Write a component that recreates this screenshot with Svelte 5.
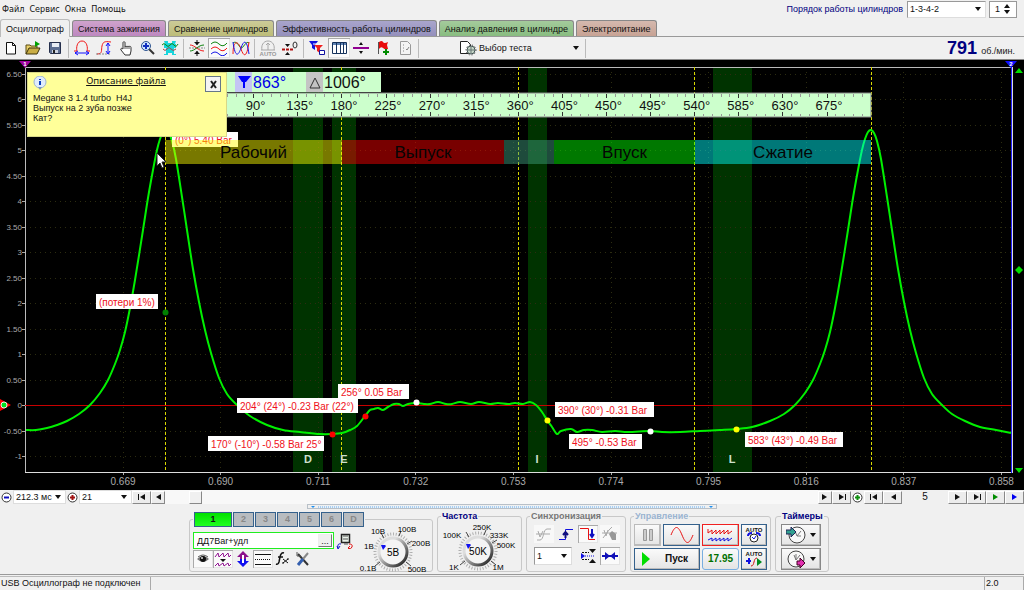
<script lang="ts">
  /**
   * App.svelte — oscilloscope main window: menu, mode tabs, toolbar, the
   * cylinder pressure plot with its phase overlay, and the control panel.
   */

  interface Tab {
    name: string;
    tone: string;
  }

  interface Tag {
    x: number;
    y: number;
    w: number;
    text: string;
  }

  const MENU = ['Файл', 'Сервис', 'Окна', 'Помощь'];

  const TABS: Tab[] = [
    { name: 'Осциллограф', tone: 'plain' },
    { name: 'Система зажигания', tone: 'pink' },
    { name: 'Сравнение цилиндров', tone: 'olive' },
    { name: 'Эффективность работы цилиндров', tone: 'violet' },
    { name: 'Анализ давления в цилиндре', tone: 'green' },
    { name: 'Электропитание', tone: 'tan' },
  ];

  // '|' stands for a separator
  const TOOLS = [
    'new', 'open', 'save', '|', 'period', 'level', 'hand', 'zoom', 'clamp', '|',
    'center', 'waves', 'overlap', '|', 'auto', 'zero', '|',
    'filter', 'grid', 'split', 'flag', 'notes', '|',
  ];
  const PRESSED = ['waves', 'grid'];

  let activeTab = $state(0);
  let channel = $state('1');
  let order = $state('1-3-4-2');
  let cylinder = $state(1);
  let sweep = $state('212.3 мс');
  let scale = $state('21');
  let scroll = $state(38);
  let channelName = $state('ДД7Bar+удл');
  let syncChannel = $state('1');
  let noteOpen = $state(true);

  // ── Plot geometry ─────────────────────────────────────────────────────────
  const BASE_W = 1024;
  const TOP = 60;
  const PLOT_H = 430;
  const LEFT = 25;
  const AXIS_TOP = 67;
  const AXIS_BOTTOM = 472;
  const ZERO_Y = 405;
  const BAR_PX = 51;

  let W = $state(BASE_W);
  const k = $derived(W / BASE_W);

  const sx = (x: number) => x * k;
  /** Centre of the pixel column, so that hairlines stay sharp. */
  const px = (x: number) => Math.floor(x * k) + 0.5;
  const degX = (d: number) => 165.5 + d * 0.98;

  const Y_TICKS = Array.from({ length: 16 }, (_, i) => 6.5 - i * 0.5);
  const X_TICKS = [0.669, 0.69, 0.711, 0.732, 0.753, 0.774, 0.795, 0.816, 0.837, 0.858];
  const xTick = (i: number) => 123 + i * 97.6;
  const yLabel = (v: number) => (Number.isInteger(v) ? String(v) : v.toFixed(2));

  const RULER = Array.from({ length: 15 }, (_, i) => 45 + i * 45);
  const MINOR = Array.from({ length: 80 }, (_, i) => i * 9);

  const VALVES = [
    { x: 293, w: 30, label: 'D', lx: 308 },
    { x: 332, w: 24, label: 'E', lx: 344 },
    { x: 528, w: 19, label: 'I', lx: 537 },
    { x: 713, w: 39, label: 'L', lx: 732 },
  ];

  const STROKES = [
    { x: 165, w: 177, color: '#ffff00', label: 'Рабочий' },
    { x: 342, w: 162, color: '#ff0000', label: 'Выпуск' },
    { x: 504, w: 50, color: '#40a080', label: '' },
    { x: 554, w: 141, color: '#00ff00', label: 'Впуск' },
    { x: 695, w: 176, color: '#00ffff', label: 'Сжатие' },
  ];

  const TAGS: Tag[] = [
    { x: 96, y: 294, w: 62, text: '(потери 1%)' },
    { x: 338, y: 384, w: 71, text: '256° 0.05 Bar' },
    { x: 237, y: 398, w: 121, text: '204° (24°) -0.23 Bar (22°)' },
    { x: 208, y: 436, w: 116, text: '170° (-10°) -0.58 Bar 25°' },
    { x: 555, y: 402, w: 99, text: '390° (30°) -0.31 Bar' },
    { x: 569, y: 434, w: 73, text: '495° -0.53 Bar' },
    { x: 745, y: 432, w: 98, text: '583° (43°) -0.49 Bar' },
  ];

  const DOTS = [
    { x: 165, y: 312, color: '#008000' },
    { x: 332, y: 434, color: '#ff0000' },
    { x: 365, y: 416, color: '#ff0000' },
    { x: 416, y: 402, color: '#ffffff' },
    { x: 547, y: 420, color: '#ffff00' },
    { x: 650, y: 431, color: '#ffffff' },
    { x: 736, y: 429, color: '#ffff00' },
  ];

  const PERIOD = 705;
  const RISE: [number, number][] = [
    [90, 405], [100, 393], [108, 380], [115, 364], [120, 350], [125, 332], [130, 308],
    [135, 280], [143, 230], [148, 198], [153, 170], [157, 150], [160, 139], [163, 132],
    [166, 130], [169, 133], [172, 141], [176, 159], [182, 197], [187, 230], [193, 269],
    [199, 302], [205, 330], [211, 353], [219, 378], [227, 394],
  ];
  const SAMPLES: [number, number][] = [
    [26, 430], [36, 430], [47, 428], [57, 425], [67, 421], [79, 414],
    ...RISE,
    [237, 405], [250, 416], [267, 425], [283, 430], [300, 432], [320, 434], [332, 434],
    [342, 433], [350, 430], [357, 426], [365, 416], [370, 410], [374, 409], [378, 408],
    [383, 410], [388, 407], [394, 404], [399, 404], [403, 406], [408, 404], [416, 403],
    [424, 404], [430, 404], [438, 402], [446, 404], [452, 404], [460, 402], [471, 404],
    [479, 402], [490, 404], [498, 403], [508, 404], [515, 403], [523, 404], [530, 402],
    [536, 405], [542, 412], [547, 420], [552, 427], [557, 434], [561, 431], [571, 429],
    [577, 432], [584, 430], [592, 430], [602, 432], [615, 431], [628, 432], [650, 431],
    [662, 432], [680, 432], [700, 431], [720, 430], [736, 429], [752, 427], [770, 421],
    [784, 414],
    ...RISE.map(([x, y]): [number, number] => [x + PERIOD, y]),
    [942, 405], [952, 414], [965, 421], [980, 427], [996, 430], [1011, 433],
  ];

  /** Catmull-Rom through the samples, as a cubic path. */
  function smooth(points: [number, number][]): string {
    let d = `M${sx(points[0][0])} ${points[0][1]}`;
    for (let i = 0; i < points.length - 1; i++) {
      const a = points[Math.max(0, i - 1)];
      const b = points[i];
      const c = points[i + 1];
      const e = points[Math.min(points.length - 1, i + 2)];
      d += `C${sx(b[0] + (c[0] - a[0]) / 6)} ${b[1] + (c[1] - a[1]) / 6} `;
      d += `${sx(c[0] - (e[0] - b[0]) / 6)} ${c[1] - (e[1] - b[1]) / 6} ${sx(c[0])} ${c[1]}`;
    }
    return d;
  }

  const trace = $derived(smooth(SAMPLES));

  // ── Knobs ─────────────────────────────────────────────────────────────────
  const GAIN = [
    { x: 14, y: 49, t: '0.1В' }, { x: 15, y: 27, t: '1В' }, { x: 24, y: 12, t: '10В' },
    { x: 53, y: 10, t: '100В' }, { x: 67, y: 24, t: '200В' }, { x: 63, y: 50, t: '500В' },
  ];
  const RATE = [
    { x: 13, y: 49, t: '1K' }, { x: 11, y: 17, t: '100K' }, { x: 41, y: 9, t: '250K' },
    { x: 58, y: 17, t: '333K' }, { x: 65, y: 27, t: '500K' }, { x: 57, y: 49, t: '1M' },
  ];

  const CHANNEL_TOOLS = ['eye', 'wavepair', 'updown', 'lines', 'fx', 'tools'];
  const CHANNEL_PRESSED = ['eye', 'wavepair', 'lines'];
</script>

{#snippet icon(name: string)}
  <svg class="icon" width="18" height="16" viewBox="0 0 18 16" fill="none" aria-hidden="true">
    {#if name === 'new'}
      <path d="M4.500 2.500h6l3 3v8.500h-9z" fill="#fff" stroke="#111" />
      <path d="M10.500 2.500v3h3" stroke="#111" />
    {:else if name === 'open'}
      <path d="M2 14V5h4l1 1h6v3" fill="#e8cf6a" stroke="#5a4a10" />
      <path d="M2 14l3-6h11l-3 6z" fill="#c9ad45" stroke="#3c320c" />
      <path d="M11 1l5 3-5 3z" fill="#00a000" />
    {:else if name === 'save'}
      <path d="M3.500 2.500h11v11h-10l-1-1z" fill="#5d6f92" stroke="#252f4c" />
      <path d="M6 3h7v4H6z" fill="#e8edf5" /><path d="M6 10h6v3H6z" fill="#ccd3e0" /><path d="M7 10h2v3H7z" fill="#222" />
    {:else if name === 'period'}
      <path d="M1 11h3C3 8 4 1 9 1s6 7 5 10h3" stroke="#f01818" />
      <path d="M2 13h14M5 11l-3 2 3 2M13 11l3 2-3 2" stroke="#1010ff" />
    {:else if name === 'level'}
      <path d="M2 14c6 0 4-4 5-8s2-5 9-4" stroke="#f01818" />
      <path d="M1 14h14" stroke="#888" stroke-dasharray="2 1" />
      <path d="M13 3v11M11 6l2-3 2 3M11 11l2 3 2-3" stroke="#1010ff" />
    {:else if name === 'hand'}
      <path d="M6 9V2.500c0-1 2-1 2 0V7c0-1 2-1 2 0 0-1 2-1 2 0 0-1 2-1 2 .500V11l-1 4H8l-4-5c-1-2 1-2 2-1z" fill="#fff" stroke="#333" />
      <path d="M8 7v2M10 7v2M12 7v2" stroke="#555" />
    {:else if name === 'zoom'}
      <path d="M10 9l5 5" stroke="#333" stroke-width="2" />
      <circle cx="7" cy="6" r="4.500" fill="#cfe6ff" stroke="#2f5590" />
      <path d="M4 6h6M7 3v6" stroke="#1030c0" stroke-width="2" />
    {:else if name === 'clamp'}
      <path d="M3 1h4v2h4V1h4l-1 3h1v4h-2v6h2v1h-4v-2H7v2H3v-1h2V8H3V4h1z" fill="#18d5dc" />
      <path d="M1 5q2-3 4 0t4 0 4 0 4-1" stroke="#118511" /><path d="M2 9q2 3 4 0t4 0 5 0" stroke="#a04848" />
    {:else if name === 'center'}
      <path d="M9 0v5M9 16v-5" stroke="#111" /><path d="M6 2h6L9 5zM6 14h6l-3-3z" fill="#111" />
      <path d="M1 8h16" stroke="#888" stroke-dasharray="2 1" />
      <path d="M2 5c5 0 8 6 14 6" stroke="#f01818" /><path d="M2 11c5 0 8-6 14-6" stroke="#108510" />
    {:else if name === 'waves'}
      <path d="M1 4q4-4 8 0t8-1" stroke="#118511" /><path d="M1 9q4-4 8 0t8-1" stroke="#f01818" />
      <path d="M1 14q4-4 8 0t8-1" stroke="#1717e8" />
    {:else if name === 'overlap'}
      <path d="M1 3c4-3 6 4 8 5s5-8 8-5" stroke="#118511" />
      <path d="M1 14c0-14 5-14 8-5s6 8 8-7" stroke="#f01818" />
      <path d="M1 2c2 15 5 15 8 6s6-8 8 6" stroke="#1717e8" />
    {:else if name === 'auto'}
      <path d="M3 10c-1-4 1-9 6-9s7 5 6 9M9 10V3M7 5l2-2 2 2M2 10h14" stroke="#a8a8a8" />
      <text x="9" y="16" class="tiny" text-anchor="middle" fill="#999">AUTO</text>
    {:else if name === 'zero'}
      <path d="M4 4h5L6.500 7zM4 15h5L6.500 12z" fill="#111" />
      <path d="M1 9.500h11" stroke="#b01010" stroke-width="2" stroke-dasharray="3 1" />
      <ellipse cx="14" cy="5" rx="2" ry="3" stroke="#333" />
    {:else if name === 'filter'}
      <path d="M1 1h9L7 5v5L4 8V5z" fill="#1010e0" />
      <path d="M6 5h9l-3 3v5l-3-2V8z" fill="#f02020" /><path d="M5 4h10" stroke="#fff" />
      <path d="M11.500 10.500h5v4h-5z" fill="#fff" stroke="#1010a0" />
    {:else if name === 'grid'}
      <path d="M2.500 2.500h14v11h-14z" fill="#fff" stroke="#16335c" />
      <path d="M3 3h13v2H3z" fill="#5e83b4" />
      <path d="M6.500 3v10M10.500 3v10M13.500 3v10" stroke="#16335c" />
    {:else if name === 'split'}
      <path d="M1 8h16" stroke="#900090" stroke-width="2" />
      <path d="M9 2l2 3H7zM9 14l2-3H7z" fill="#111" />
    {:else if name === 'flag'}
      <path d="M4.500 2v12" stroke="#555" />
      <path d="M5 2q3-2 4 0t5 0l-1 3 1 4q-3 1-5-1t-4 1z" fill="#e80c0c" />
      <path d="M12 9v6M9 12h6" stroke="#008c00" stroke-width="2" />
    {:else if name === 'notes'}
      <path d="M4.500 1.500h7l3 3v10h-10z" fill="#f4f4f4" stroke="#999" />
      <path d="M7 5h1M7 8h1M7 11h1M10 9l1 1 2-3" stroke="#888" />
    {:else if name === 'test'}
      <path d="M1.500 1.500h7l3 3v9h-10z" fill="#fff" stroke="#222" />
      <circle cx="12" cy="10" r="4" fill="#c8d8c8" stroke="#455" />
      <circle cx="12" cy="10" r="5" stroke="#333" stroke-dasharray="1 2" />
      <path d="M8 10h8M12 6v8" stroke="#677" />
    {:else if name === 'eye'}
      <path d="M3 8q6-6 12 0-6 6-12 0z" fill="#777" /><circle cx="9" cy="8" r="3" fill="#111" />
      <path d="M4 6q5-4 10 0" stroke="#555" /><circle cx="8" cy="7" r="1" fill="#ddd" />
    {:else if name === 'wavepair'}
      <path d="M1 6l3-4 1 4 4-4 1 4 4-4 1 4 2-2M1 15l3-3 1 3 4-3 1 3 4-3 1 3 2-2" stroke="#901090" />
      <path d="M6 8h6l-3 3z" fill="#111" />
    {:else if name === 'updown'}
      <path d="M9 0l6 6h-3v2H6V6H3z" fill="#8c108c" /><path d="M9 16l6-6h-3V8H6v2H3z" fill="#1010f0" />
      <path d="M9 4v8" stroke="#fff" stroke-width="2" />
    {:else if name === 'lines'}
      <path d="M1 3.500h16M1 13.500h16" stroke="#111" /><path d="M1 8.500h16" stroke="#111" stroke-dasharray="1 1" />
    {:else if name === 'fx'}
      <path d="M10 2q-3-1-4 4l-1 5q-1 3-3 2M4 6h5" stroke="#111" stroke-width="1.500" />
      <path d="M9 8l5 4M14 8l-5 4M13 8h2M8 12h2" stroke="#111" />
    {:else if name === 'tools'}
      <path d="M4 3l10 11" stroke="#333" stroke-width="2" />
      <path d="M14 2L9 8" stroke="#888" stroke-width="2" /><path d="M9 8l-5 6" stroke="#345fae" stroke-width="3" />
      <path d="M3 1v4h4" stroke="#555" />
    {:else if name === 'probe'}
      <path d="M5.500 1.500h8v8h-8z" fill="#e8f0e8" stroke="#222" stroke-width="1.500" />
      <path d="M7 3h5M7 6h5M8 11h4" stroke="#555" />
      <path d="M5 11q-4-1-3 4M1 13l1 3 2-3" stroke="#1010d0" />
      <path d="M13 11q4 0 3 3t-4 1M14 13l-2 2 2 1" stroke="#e01010" />
    {:else if name === 'sync-off'}
      <path d="M2 14h3c4 0 3-11 7-11h4M1 8h14M3 5l2 6 3-6" stroke="#aaa" />
    {:else if name === 'rise'}
      <path d="M2 13.500h6.500v-10H16" stroke="#1010e0" /><path d="M8.500 6v6M6 9l2.500-3L11 9" stroke="#111080" stroke-width="2" />
    {:else if name === 'fall'}
      <path d="M1 2.500h8.500v11H16" stroke="#e81010" /><path d="M13 3v8M11 8l2 3 2-3" stroke="#1010c0" stroke-width="2" />
    {:else if name === 'sync-man'}
      <path d="M2 12l6-8 3-3M1 7h15M3 4l2 6 2-6" stroke="#aaa" /><path d="M8 8l3-3 4 3v6h-4z" fill="#999" />
    {:else if name === 'window'}
      <path d="M3 4.500h7M3 11.500h7" stroke="#111" stroke-dasharray="2 1" />
      <path d="M2 5l4 3-4 3z" fill="#1010e0" /><path d="M10 1h7l-3.500 4zM10 15h7l-3.500-4z" fill="#111" />
      <path d="M6 8h10" stroke="#1010e0" stroke-dasharray="1 1" />
    {:else if name === 'squeeze'}
      <path d="M1 8h16" stroke="#1010b8" stroke-width="2" /><path d="M4 4l5 4-5 4zM14 4l-5 4 5 4z" fill="#1010b8" />
    {:else if name === 'pause'}
      <path d="M4.500 2.500h3v11h-3zM10.500 2.500h3v11h-3z" fill="#ccc" stroke="#999" />
    {:else if name === 'clock-auto'}
      <text x="9" y="5" class="tiny" text-anchor="middle" fill="#111">AUTO</text>
      <circle cx="9" cy="11" r="4" fill="#fff" stroke="#222" /><path d="M7 10l2 2 2-3" stroke="#1010e0" />
      <path d="M3 9q0-3 4-3M15 9q0-3-4-3" stroke="#1010e0" stroke-width="2" />
    {:else if name === 'level-auto'}
      <text x="9" y="5" class="tiny" text-anchor="middle" fill="#111">AUTO</text>
      <path d="M1 10h5M4 7v6" stroke="#1010e0" stroke-width="2" /><path d="M6 15c4 0 2-8 6-8" stroke="#d01010" />
      <path d="M12 7l5 4-5 4z" fill="#008c20" />
    {/if}
  </svg>
{/snippet}

{#snippet arrow(kind: string)}
  <svg width="14" height="10" viewBox="0 0 14 10" aria-hidden="true">
    {#if kind === 'first' || kind === 'back'}
      <path d="M10 2v6L5 5z" />
    {:else}
      <path d="M4 2v6l5-3z" />
    {/if}
    {#if kind === 'first'}<path d="M3 2h1v6H3z" />{/if}
    {#if kind === 'last'}<path d="M10 2h1v6h-1z" />{/if}
  </svg>
{/snippet}

{#snippet knob(cx: number, value: string, labels: { x: number; y: number; t: string }[])}
  <svg class="knob" width="78" height="54" viewBox="0 0 78 54" role="img" aria-label={value}>
    <defs>
      <linearGradient id="rim" x1="0" y1="0" x2="1" y2="1">
        <stop offset="0.300" stop-color="#ddd" /><stop offset="1" stop-color="#111" />
      </linearGradient>
    </defs>
    <circle {cx} cy="30" r="18" fill="none" stroke="#aaa" stroke-width="3" stroke-dasharray="1 2"
      pathLength="120" />
    <circle {cx} cy="30" r="14" fill="#f4f4f4" stroke="url(#rim)" stroke-width="3" />
    <path d="M{cx - 12} 23l4 0 1 1-3 4z" fill="#1010f0" />
    <path d="M{cx - 13} 40l-5 4M{cx + 13} 40l5 4M{cx - 9} 16l-3-5M{cx + 6} 14l2-5M{cx + 14} 22l5-3" stroke="#444" />
    <text x={cx} y="34" class="knob-value" text-anchor="middle">{value}</text>
    {#each labels as l}
      <text x={l.x} y={l.y} class="knob-label" text-anchor="middle">{l.t}</text>
    {/each}
  </svg>
{/snippet}

<div class="window">
  <header class="menubar">
    <nav class="menu">
      {#each MENU as item}
        <button type="button">{item}</button>
      {/each}
    </nav>
    <label class="order" for="order">Порядок работы цилиндров</label>
    <span class="combo order-box">
      <select id="order" bind:value={order}>
        <option>1-3-4-2</option>
        <option>1-2-4-3</option>
      </select>
    </span>
    <span class="spin">
      <input type="number" aria-label="Цилиндр" min="1" max="8" bind:value={cylinder} />
      <span class="spin-buttons">
        <button type="button" class="up" aria-label="Больше" onclick={() => cylinder++}></button>
        <button type="button" class="down" aria-label="Меньше" onclick={() => cylinder--}></button>
      </span>
    </span>
  </header>

  <div class="tabs" role="tablist">
    {#each TABS as tab, i}
      <button
        type="button"
        role="tab"
        class="tab {tab.tone}"
        class:active={activeTab === i}
        aria-selected={activeTab === i}
        onclick={() => (activeTab = i)}
      >{tab.name}</button>
    {/each}
  </div>

  <div class="toolbar">
    {#each TOOLS as tool}
      {#if tool === '|'}
        <span class="sep"></span>
      {:else}
        <button type="button" class="tool" class:pressed={PRESSED.includes(tool)} aria-label={tool}>
          {@render icon(tool)}
        </button>
      {/if}
    {/each}
    <button type="button" class="test">
      {@render icon('test')}
      <span>Выбор теста</span>
      <i class="caret"></i>
    </button>
    <span class="sep"></span>
    <output class="rpm"><b>791</b> об./мин.</output>
  </div>

  <main class="plot" bind:clientWidth={W}>
    <svg class="plot-svg" viewBox="0 {TOP} {W} {PLOT_H}" height={PLOT_H}>
      <!-- Valve timing bands -->
      {#each VALVES as v}
        <rect x={sx(v.x)} y={AXIS_TOP} width={sx(v.w)} height={AXIS_BOTTOM - AXIS_TOP} fill="#003300" />
      {/each}

      <!-- Grid -->
      {#each Y_TICKS as v}
        {@const y = Math.round(ZERO_Y - v * BAR_PX)}
        <line x1={LEFT} y1={y + 0.5} x2={sx(1011)} y2={y + 0.5} class="grid" />
        <line x1="22" y1={y + 0.5} x2={LEFT} y2={y + 0.5} stroke="#aaa" />
        <text x="22" y={y + 3} class="y-label" text-anchor="end">{yLabel(v)}</text>
      {/each}
      {#each X_TICKS as v, i}
        <line x1={px(xTick(i))} y1={AXIS_TOP} x2={px(xTick(i))} y2={AXIS_BOTTOM} class="grid" />
        <line x1={px(xTick(i))} y1={AXIS_BOTTOM} x2={px(xTick(i))} y2={AXIS_BOTTOM + 3} stroke="#aaa" />
        <text x={sx(xTick(i))} y="485" class="x-label" text-anchor="middle">{v.toFixed(3)}</text>
      {/each}

      <!-- Axes -->
      <path d="M25.500 {AXIS_BOTTOM + 0.5}V67.500H{sx(1012)}" stroke="#bbb" fill="none" />
      <path d="M25 472.500H{sx(1012)}" stroke="#ddd" />
      <path d="M{px(1012)} 67V473" stroke="#ddd" />
      <path d="M{px(1011)} 67V473" stroke="#2020ff" />
      <line x1={LEFT} y1={ZERO_Y + 0.5} x2={sx(1011)} y2={ZERO_Y + 0.5} stroke="#c80000" />

      <!-- Stroke boundaries -->
      {#each [0, 180, 360, 540, 720] as d}
        <line x1={px(degX(d))} y1={AXIS_TOP} x2={px(degX(d))} y2={AXIS_BOTTOM} stroke="#d8d800" stroke-dasharray="3 2" />
      {/each}

      {#each VALVES as v}
        <text x={sx(v.lx)} y="463" class="valve" text-anchor="middle">{v.label}</text>
      {/each}

      <path d={trace} fill="none" stroke="#00f000" stroke-width="2" stroke-linejoin="round" />

      <!-- Peak value sits under the stroke bar -->
      <rect x={sx(165) + 7} y="132" width="66" height="15" fill="#fff" />
      <text x={sx(165) + 10} y="144" class="tag">(0°) 5.40 Bar</text>

      {#each STROKES as s}
        <rect x={sx(s.x)} y="140" width={sx(s.w)} height="24" fill={s.color} opacity="0.470" />
        <text x={sx(s.x + s.w / 2)} y="158" class="stroke-label" text-anchor="middle">{s.label}</text>
      {/each}

      <!-- Crank angle ruler -->
      <rect x={sx(165)} y="93" width={sx(706)} height="24" fill="#ccffcc" stroke="#888" />
      {#each MINOR as d}
        <path d="M{px(degX(d))} 94v3M{px(degX(d))} 116v-2" stroke="#999" />
      {/each}
      {#each RULER as d}
        <path d="M{px(degX(d))} 94v4M{px(degX(d))} 116v-4" stroke="#333" />
        <text x={sx(degX(d)) + 2} y="110" class="ruler" text-anchor="middle">{d}°</text>
      {/each}

      <!-- Cursor read-outs -->
      <rect x={sx(165)} y="72" width={sx(381) - sx(165)} height="20" fill="#ccffcc" />
      <rect x={sx(235)} y="72" width="17" height="20" fill="#c4c4f4" />
      <path d="M{sx(235) + 3} 76h13l-5 6h-1v6h-2v-6h-1z" fill="#0000ff" />
      <text x={sx(253)} y="88" class="readout blue">863°</text>
      <rect x={sx(306)} y="72" width="17" height="20" fill="#c4c4c4" />
      <path d="M{sx(306) + 4} 88l5-10 5 10z" fill="none" stroke="#333" />
      <text x={sx(324)} y="88" class="readout">1006°</text>

      {#each TAGS as t}
        <rect x={sx(t.x)} y={t.y} width={t.w} height="15" fill="#fff" />
        <text x={sx(t.x) + 3} y={t.y + 12} class="tag">{t.text}</text>
      {/each}
      {#each DOTS as d}
        <circle cx={sx(d.x) + 0.5} cy={d.y + 0.5} r="3" fill={d.color} />
      {/each}

      <!-- Cursors and level markers -->
      <path d="M19 61h12l-6 7z" fill="#a000a0" />
      <text x="25" y="66" class="mark" text-anchor="middle">1</text>
      <path d="M{sx(1005)} 61h12l-6 7z" fill="#1010ff" />
      <text x={sx(1011)} y="66" class="mark" text-anchor="middle">2</text>
      <path d="M{sx(1019)} 68l4 5h-8zM{sx(1019)} 266l4 4-4 4-4-4zM{sx(1019)} 473l4-5h-8z" fill="#00e000" />
      <path d="M0 399l11 6-11 6z" fill="#ff0000" />
      <circle cx="4" cy="405" r="3" fill="#00e020" stroke="#eee" />
      <path d="M157 153v13l3-3 2 5 2-1-2-5h4z" fill="#fff" stroke="#222" />
    </svg>

    {#if noteOpen}
      <aside class="note">
        <div class="note-head">
          <svg width="14" height="14" viewBox="0 0 14 14" aria-hidden="true">
            <circle cx="7" cy="6" r="6" fill="#e0ecfc" stroke="#9db4d4" />
            <path d="M5 11l2 3 2-3z" fill="#7d98bd" />
            <path d="M6 3h2v1H6zM6 5h2v4H6z" fill="#0a3ec0" />
          </svg>
          <h2>Описание файла</h2>
          <button type="button" class="close" aria-label="Закрыть" onclick={() => (noteOpen = false)}>
            <svg width="9" height="9" viewBox="0 0 9 9"><path d="M2 1l5 7M7 1L2 8" stroke="#222" stroke-width="2" /></svg>
          </button>
        </div>
        <p>Megane 3 1.4 turbo&nbsp; H4J<br />Выпуск на 2 зуба позже<br />Кат?</p>
      </aside>
    {/if}
  </main>

  <div class="nav">
    <button type="button" class="round" aria-label="Сжать">
      <svg width="11" height="11" viewBox="0 0 11 11"><circle cx="5.500" cy="5.500" r="4.500" fill="#fff" stroke="#333" /><path d="M3 5.500h5" stroke="#1010c0" stroke-width="2" /></svg>
    </button>
    <span class="combo sweep">
      <select aria-label="Развёртка" bind:value={sweep}><option>212.3 мс</option><option>100 мс</option></select>
    </span>
    <button type="button" class="round" aria-label="Растянуть">
      <svg width="11" height="11" viewBox="0 0 11 11"><circle cx="5.500" cy="5.500" r="4.500" fill="#fff" stroke="#333" /><path d="M3 5.500h5M5.500 3v5" stroke="#a01010" stroke-width="2" /></svg>
    </button>
    <span class="combo sweep">
      <select aria-label="Масштаб" bind:value={scale}><option>21</option><option>10</option></select>
    </span>
    <button type="button" class="step" aria-label="В начало">{@render arrow('first')}</button>
    <button type="button" class="step small" aria-label="Назад">{@render arrow('back')}</button>
    <input class="scroll" type="range" min="0" max="1000" aria-label="Прокрутка" bind:value={scroll} />
    <button type="button" class="step small" aria-label="Вперёд">{@render arrow('next')}</button>
    <button type="button" class="step" aria-label="В конец">{@render arrow('last')}</button>
    <button type="button" class="round" aria-label="Добавить">
      <svg width="11" height="11" viewBox="0 0 11 11"><circle cx="5.500" cy="5.500" r="4.500" fill="#fff" stroke="#333" /><path d="M3 5.500h5M5.500 3v5" stroke="#109010" stroke-width="2" /></svg>
    </button>
    <button type="button" class="step" aria-label="Первый кадр">{@render arrow('first')}</button>
    <button type="button" class="step" aria-label="Предыдущий кадр">{@render arrow('back')}</button>
    <output class="frame">5</output>
    <button type="button" class="step" aria-label="Следующий кадр">{@render arrow('next')}</button>
    <button type="button" class="step" aria-label="Последний кадр">{@render arrow('last')}</button>
    <button type="button" class="step green-arrow" aria-label="Воспроизвести">{@render arrow('next')}</button>
    <button type="button" class="step blue-arrow" aria-label="Воспроизвести всё">{@render arrow('next')}</button>
  </div>

  <div class="splitter"><i></i><span></span><i></i></div>

  <section class="panel">
    <fieldset class="group channels">
      <legend>
        {#each ['1', '2', '3', '4', '5', '6', 'D'] as c}
          <button type="button" class="channel" class:on={channel === c} onclick={() => (channel = c)}>{c}</button>
        {/each}
      </legend>
      <div class="channel-main">
        <div class="channel-row">
          <span class="channel-name">
            <input type="text" aria-label="Датчик" bind:value={channelName} />
            <button type="button" aria-label="Выбрать датчик">...</button>
          </span>
          {@render icon('probe')}
        </div>
        <div class="channel-row">
          {#each CHANNEL_TOOLS as t}
            <button type="button" class="flat" class:pressed={CHANNEL_PRESSED.includes(t)} aria-label={t}>{@render icon(t)}</button>
          {/each}
        </div>
      </div>
      {@render knob(39, '5В', GAIN)}
    </fieldset>

    <fieldset class="group rate">
      <legend class="navy">Частота</legend>
      {@render knob(37, '50K', RATE)}
    </fieldset>

    <fieldset class="group sync">
      <legend class="gray">Синхронизация</legend>
      <div class="sync-grid">
        <button type="button" class="flat light" aria-label="Без синхронизации" disabled>{@render icon('sync-off')}</button>
        <button type="button" class="flat" aria-label="По фронту">{@render icon('rise')}</button>
        <button type="button" class="flat pressed" aria-label="По спаду">{@render icon('fall')}</button>
        <button type="button" class="flat light" aria-label="Вручную" disabled>{@render icon('sync-man')}</button>
        <span class="combo wide">
          <select aria-label="Канал синхронизации" bind:value={syncChannel}><option>1</option><option>2</option></select>
        </span>
        <button type="button" class="flat" aria-label="Окно">{@render icon('window')}</button>
        <button type="button" class="flat pressed" aria-label="Сжатие">{@render icon('squeeze')}</button>
      </div>
    </fieldset>

    <fieldset class="group control">
      <legend class="pale">Управление</legend>
      <div class="control-grid">
        <button type="button" class="push dim" aria-label="Пауза" disabled>{@render icon('pause')}</button>
        <button type="button" class="push" aria-label="Один сигнал">
          <svg width="26" height="18" viewBox="0 0 26 18"><path d="M2 9C6-1 9-1 13 9s7 10 11 0" fill="none" stroke="#e81010" /></svg>
        </button>
        <button type="button" class="push red" aria-label="Два сигнала">
          <svg width="28" height="16" viewBox="0 0 28 16" fill="none">
            <path d="M1 2v4l4-3v4l4-4v4l4-4v4l4-4v4l4-4v4l4-3" stroke="#e81010" />
            <path d="M1 13l4-2v3l4-3v3l4-3v3l4-3v3l4-3v3l4-3" stroke="#1010e0" />
          </svg>
        </button>
        <button type="button" class="push" aria-label="Авторазвёртка">{@render icon('clock-auto')}</button>
        <button type="button" class="push start">
          <svg width="9" height="14" viewBox="0 0 9 14"><path d="M0 0v14l8-7z" fill="#00dd00" /></svg>
          <span>Пуск</span>
        </button>
        <output class="push value">17.95</output>
        <button type="button" class="push" aria-label="Автоуровень">{@render icon('level-auto')}</button>
      </div>
    </fieldset>

    <fieldset class="group timers">
      <legend class="navy">Таймеры</legend>
      <button type="button" class="push grayed" aria-label="Таймер старта">
        <svg width="20" height="20" viewBox="0 0 20 20">
          <circle cx="11" cy="10" r="8" fill="#f8f8f8" stroke="#444" />
          <path d="M9 6l2 5 4-5M11 11h4" stroke="#777" fill="none" /><path d="M0 5h5V2l5 5-5 5V9H0z" fill="#30a090" stroke="#225" />
        </svg>
        <i class="caret"></i>
      </button>
      <button type="button" class="push grayed" aria-label="Таймер остановки">
        <svg width="20" height="20" viewBox="0 0 20 20">
          <circle cx="10" cy="10" r="8" fill="#f8f8f8" stroke="#444" />
          <path d="M8 6l2 5 4-5M10 11V5" stroke="#777" fill="none" /><path d="M11 12h3v-3l5 5-5 5v-3h-3z" fill="#e030b0" stroke="#402" />
        </svg>
        <i class="caret"></i>
      </button>
    </fieldset>
  </section>

  <footer class="status">
    <span class="device">USB Осциллограф не подключен</span>
    <span class="message"></span>
    <span class="version">2.0</span>
  </footer>
</div>

<style>
  :global(body) {
    background: #f0f0f0;
  }

  .window {
    display: flex;
    flex-direction: column;
    min-height: 100vh;
    overflow: hidden;
    background: #f0f0f0;
    color: #111;
    font-family: 'Liberation Sans', Arial, sans-serif;
    font-size: 9px;
    line-height: 12px;
  }

  button,
  input,
  select,
  output {
    box-sizing: border-box;
    margin: 0;
    padding: 0;
    color: inherit;
    font: inherit;
  }

  button {
    border: 0;
    background: none;
  }

  svg {
    display: block;
    flex: none;
  }

  .tiny {
    font-size: 6px;
    font-weight: bold;
  }

  /* ── Menu ── */
  .menubar {
    display: flex;
    align-items: center;
    height: 18px;
    padding-right: 7px;
  }

  .menu {
    display: flex;
    flex: 1;
    gap: 5px;
    padding-left: 2px;
    font-family: 'DejaVu Sans Condensed', 'DejaVu Sans', sans-serif;
  }

  .order {
    margin-right: 4px;
    color: #000080;
  }

  .combo {
    display: grid;
    align-items: center;
    background: #fff;
  }

  .combo select {
    grid-area: 1 / 1;
    width: 100%;
    height: 100%;
    padding-left: 2px;
    border: 1px solid #999;
    border-right-color: #ddd;
    border-bottom-color: #ddd;
    border-radius: 0;
    background: transparent;
    appearance: none;
    outline: none;
  }

  .combo::after,
  .caret {
    border: 3px solid transparent;
    border-top: 4px solid #111;
    border-bottom: 0;
    content: '';
  }

  .combo::after {
    grid-area: 1 / 1;
    justify-self: end;
    margin-right: 5px;
    pointer-events: none;
  }

  .order-box {
    width: 79px;
    height: 17px;
    margin-right: 3px;
  }

  .spin {
    display: flex;
    box-sizing: border-box;
    width: 28px;
    height: 17px;
    border: 1px solid #999;
    background: #fff;
  }

  .spin input {
    width: 14px;
    padding-left: 5px;
    border: 0;
    background: none;
    appearance: textfield;
  }

  .spin input::-webkit-inner-spin-button {
    display: none;
  }

  .spin-buttons {
    display: flex;
    flex-direction: column;
    justify-content: space-evenly;
  }

  .up,
  .down {
    border: 3px solid transparent;
  }

  .up {
    border-top: 0;
    border-bottom: 4px solid #111;
  }

  .down {
    border-top: 4px solid #111;
    border-bottom: 0;
  }

  /* ── Tabs ── */
  .tabs {
    display: flex;
    align-items: flex-end;
    gap: 2px;
    height: 19px;
    border-bottom: 1px solid #999;
    box-sizing: border-box;
  }

  .tab {
    height: 16px;
    padding: 0 5px;
    border: 1px solid #888;
    border-bottom: 0;
    border-radius: 3px 3px 0 0;
    white-space: nowrap;
  }

  .tab.active {
    height: 18px;
    margin-bottom: -1px;
    border-color: #bbb;
    background: #f0f0f0;
  }

  .pink {
    background: linear-gradient(#cfa2cc, #bd88bf);
  }

  .olive {
    background: linear-gradient(#cccb98, #bcbc78);
  }

  .violet {
    background: linear-gradient(#a9a5cc, #948fbc);
  }

  .green {
    background: linear-gradient(#a4cb9c, #88bc80);
  }

  .tan {
    background: linear-gradient(#d5b9ae, #c7a294);
  }

  /* ── Toolbar ── */
  .toolbar {
    display: flex;
    align-items: center;
    height: 23px;
    box-sizing: border-box;
    border-bottom: 1px solid #888;
  }

  .tool {
    display: flex;
    align-items: center;
    justify-content: center;
    width: 22px;
    height: 20px;
  }

  .pressed {
    background: #fafafa;
    box-shadow: inset 1px 1px #aaa, inset -1px -1px #e4e4e4;
  }

  .sep {
    width: 1px;
    height: 19px;
    margin: 0 2px;
    background: #bbb;
  }

  .test {
    display: flex;
    align-items: center;
    gap: 2px;
    width: 124px;
    margin-left: 38px;
    padding-right: 4px;
  }

  .test .caret {
    margin-left: auto;
  }

  .rpm {
    display: flex;
    align-items: baseline;
    gap: 4px;
    margin-left: auto;
    padding-right: 9px;
    color: #222;
  }

  .rpm b {
    color: #000080;
    font-size: 18px;
    line-height: 20px;
  }

  /* ── Plot ── */
  .plot {
    position: relative;
    background: #000;
  }

  .plot-svg {
    width: 100%;
  }

  .grid {
    stroke: #2c2c10;
    stroke-dasharray: 1 4;
  }

  .y-label {
    fill: #aaa;
    font-size: 8px;
  }

  .x-label {
    fill: #aaa;
    font-size: 10px;
  }

  .valve {
    fill: #cde0cd;
    font-size: 11px;
    font-weight: bold;
  }

  .tag {
    fill: #f01020;
    font-size: 10px;
  }

  .stroke-label {
    fill: #050505;
    font-size: 17px;
  }

  .ruler {
    fill: #111;
    font-size: 13px;
  }

  .readout {
    fill: #111;
    font-size: 16px;
  }

  .readout.blue {
    fill: #0000e8;
  }

  .mark {
    fill: #fff;
    font-size: 6px;
    font-weight: bold;
  }

  .note {
    position: absolute;
    top: 12px;
    left: 27px;
    box-sizing: border-box;
    width: 200px;
    height: 65px;
    padding: 3px 5px;
    border: 1px solid #d8d888;
    background: #ffff99;
  }

  .note-head {
    display: flex;
    justify-content: space-between;
    height: 17px;
  }

  .note h2 {
    margin: 0;
    font-family: 'DejaVu Sans', Verdana, sans-serif;
    font-size: 9px;
    font-weight: normal;
    line-height: 10px;
    text-decoration: underline;
  }

  .close {
    display: flex;
    align-items: center;
    justify-content: center;
    width: 16px;
    height: 16px;
    border: 1px solid #678;
    background: #f4f4f4;
  }

  .note p {
    margin: 0;
    line-height: 10px;
  }

  /* ── Frame navigation ── */
  .nav {
    display: flex;
    align-items: center;
    height: 14px;
    background: #f0f0f0;
  }

  .round {
    width: 13px;
    padding: 0 1px;
  }

  .sweep {
    width: 53px;
    height: 14px;
  }

  .sweep select {
    border-color: #ddd;
  }

  .step {
    display: flex;
    align-items: center;
    justify-content: center;
    width: 19px;
    height: 13px;
    border: 1px solid #fff;
    border-right-color: #888;
    border-bottom-color: #888;
    background: #ececec;
    fill: #111;
  }

  .step.small {
    width: 14px;
  }

  .green-arrow {
    fill: #008c00;
  }

  .blue-arrow {
    fill: #0000f0;
  }

  .scroll {
    flex: 1;
    min-width: 0;
    height: 14px;
    background: #f8f8f8;
    appearance: none;
  }

  .scroll::-webkit-slider-thumb {
    width: 13px;
    height: 13px;
    border: 1px solid #fff;
    border-right-color: #888;
    border-bottom-color: #888;
    background: #f0f0f0;
    appearance: none;
  }

  .frame {
    width: 46px;
    text-align: center;
    font-size: 10px;
  }

  .splitter {
    display: flex;
    align-items: center;
    align-self: center;
    gap: 3px;
    width: 410px;
    height: 5px;
    padding: 0 3px;
    box-sizing: border-box;
    border: 1px solid #b8c0c8;
  }

  .splitter i {
    border: 2px solid transparent;
    border-top: 2px solid #1e8ff0;
    border-bottom: 0;
  }

  .splitter span {
    flex: 1;
    height: 2px;
    background: repeating-linear-gradient(90deg, #a8cdf0 0 1px, #e8f2fa 1px 2px);
  }

  /* ── Control panel ── */
  .panel {
    display: flex;
    flex: 1;
    align-items: flex-end;
    justify-content: center;
    gap: 4px;
    padding: 2px 6px 2px 0;
    border-bottom: 1px solid #999;
  }

  .group {
    display: flex;
    box-sizing: border-box;
    height: 60px;
    min-width: 0;
    margin: 0;
    padding: 0 3px;
    border: 1px solid #c8c8c8;
    border-radius: 3px;
  }

  .group legend {
    height: 9px;
    padding: 0 1px;
    font-size: 9px;
    font-weight: bold;
    line-height: 9px;
  }

  .navy {
    color: #000080;
  }

  .gray {
    color: #777;
  }

  .pale {
    color: #9ab4d0;
  }

  .channels {
    width: 244px;
    padding-right: 0;
  }

  .channels legend {
    display: flex;
    gap: 1px;
    height: 15px;
  }

  .channel {
    width: 21px;
    height: 15px;
    border: 1px solid #35618c;
    background: #b8bcc0;
    color: #888;
    font-weight: bold;
  }

  .channel.on {
    width: 38px;
    background: linear-gradient(#00e000, #20ff20);
    color: #111;
  }

  .channel-main {
    display: flex;
    flex: 1;
    flex-direction: column;
    gap: 1px;
    min-width: 0;
    padding-top: 5px;
  }

  .channel-row {
    display: flex;
    align-items: center;
  }

  .channel-name {
    display: flex;
    box-sizing: border-box;
    width: 143px;
    height: 17px;
    margin-right: 2px;
    padding: 1px;
    border: 1px solid #20ee20;
    background: #fff;
  }

  .channel-name input {
    flex: 1;
    min-width: 0;
    padding-left: 2px;
    border: 0;
    background: none;
  }

  .channel-name button {
    width: 14px;
    border: 1px solid #eee;
    border-right-color: #777;
    border-bottom-color: #777;
    background: #f0f0f0;
    line-height: 6px;
  }

  .flat {
    display: flex;
    align-items: center;
    justify-content: center;
    width: 20px;
    height: 18px;
  }

  .light {
    background: #f8f8f8;
  }

  .channels .knob {
    margin-top: -5px;
  }

  .knob-label {
    font-size: 8px;
  }

  .knob-value {
    font-size: 10px;
  }

  .rate {
    width: 85px;
  }

  .sync {
    width: 100px;
  }

  .sync-grid {
    display: grid;
    grid-template-columns: repeat(4, 20px);
    gap: 4px 2px;
    align-content: start;
    padding: 4px 4px 0;
  }

  .wide {
    grid-column: span 2;
    width: 38px;
    height: 18px;
  }

  .control {
    width: 141px;
  }

  .control-grid {
    display: grid;
    grid-template-columns: 27px 37px 37px 26px;
    grid-template-rows: 22px 22px;
    gap: 2px;
    padding-top: 3px;
  }

  .push {
    display: flex;
    align-items: center;
    justify-content: center;
    border: 1px solid #35618c;
    background: linear-gradient(#fafafa, #e4e4e4);
    box-shadow: inset -1px -1px #bbb;
  }

  .dim {
    border-color: #bbb;
  }

  .red {
    border-color: #f02020;
  }

  .start {
    grid-column: span 2;
    justify-content: flex-start;
    gap: 14px;
    padding-left: 7px;
    font-size: 10px;
    font-weight: bold;
  }

  .value {
    border-color: #78aee0;
    border-radius: 3px;
    box-shadow: none;
    color: #007000;
    font-size: 10px;
    font-weight: bold;
  }

  .timers {
    flex-direction: column;
    gap: 2px;
    width: 54px;
    padding: 0 5px;
  }

  .timers .push {
    gap: 4px;
    width: 40px;
    height: 22px;
  }

  .grayed {
    border-color: #888;
  }

  .timers legend + .push {
    margin-top: 3px;
  }

  /* ── Status bar ── */
  .status {
    display: flex;
    height: 13px;
    margin-top: 1px;
    border-top: 1px solid #bbb;
  }

  .status span {
    padding-left: 1px;
    border-right: 1px solid #aaa;
  }

  .device {
    width: 149px;
  }

  .message {
    flex: 1;
  }

  .version {
    width: 37px;
  }
</style>
